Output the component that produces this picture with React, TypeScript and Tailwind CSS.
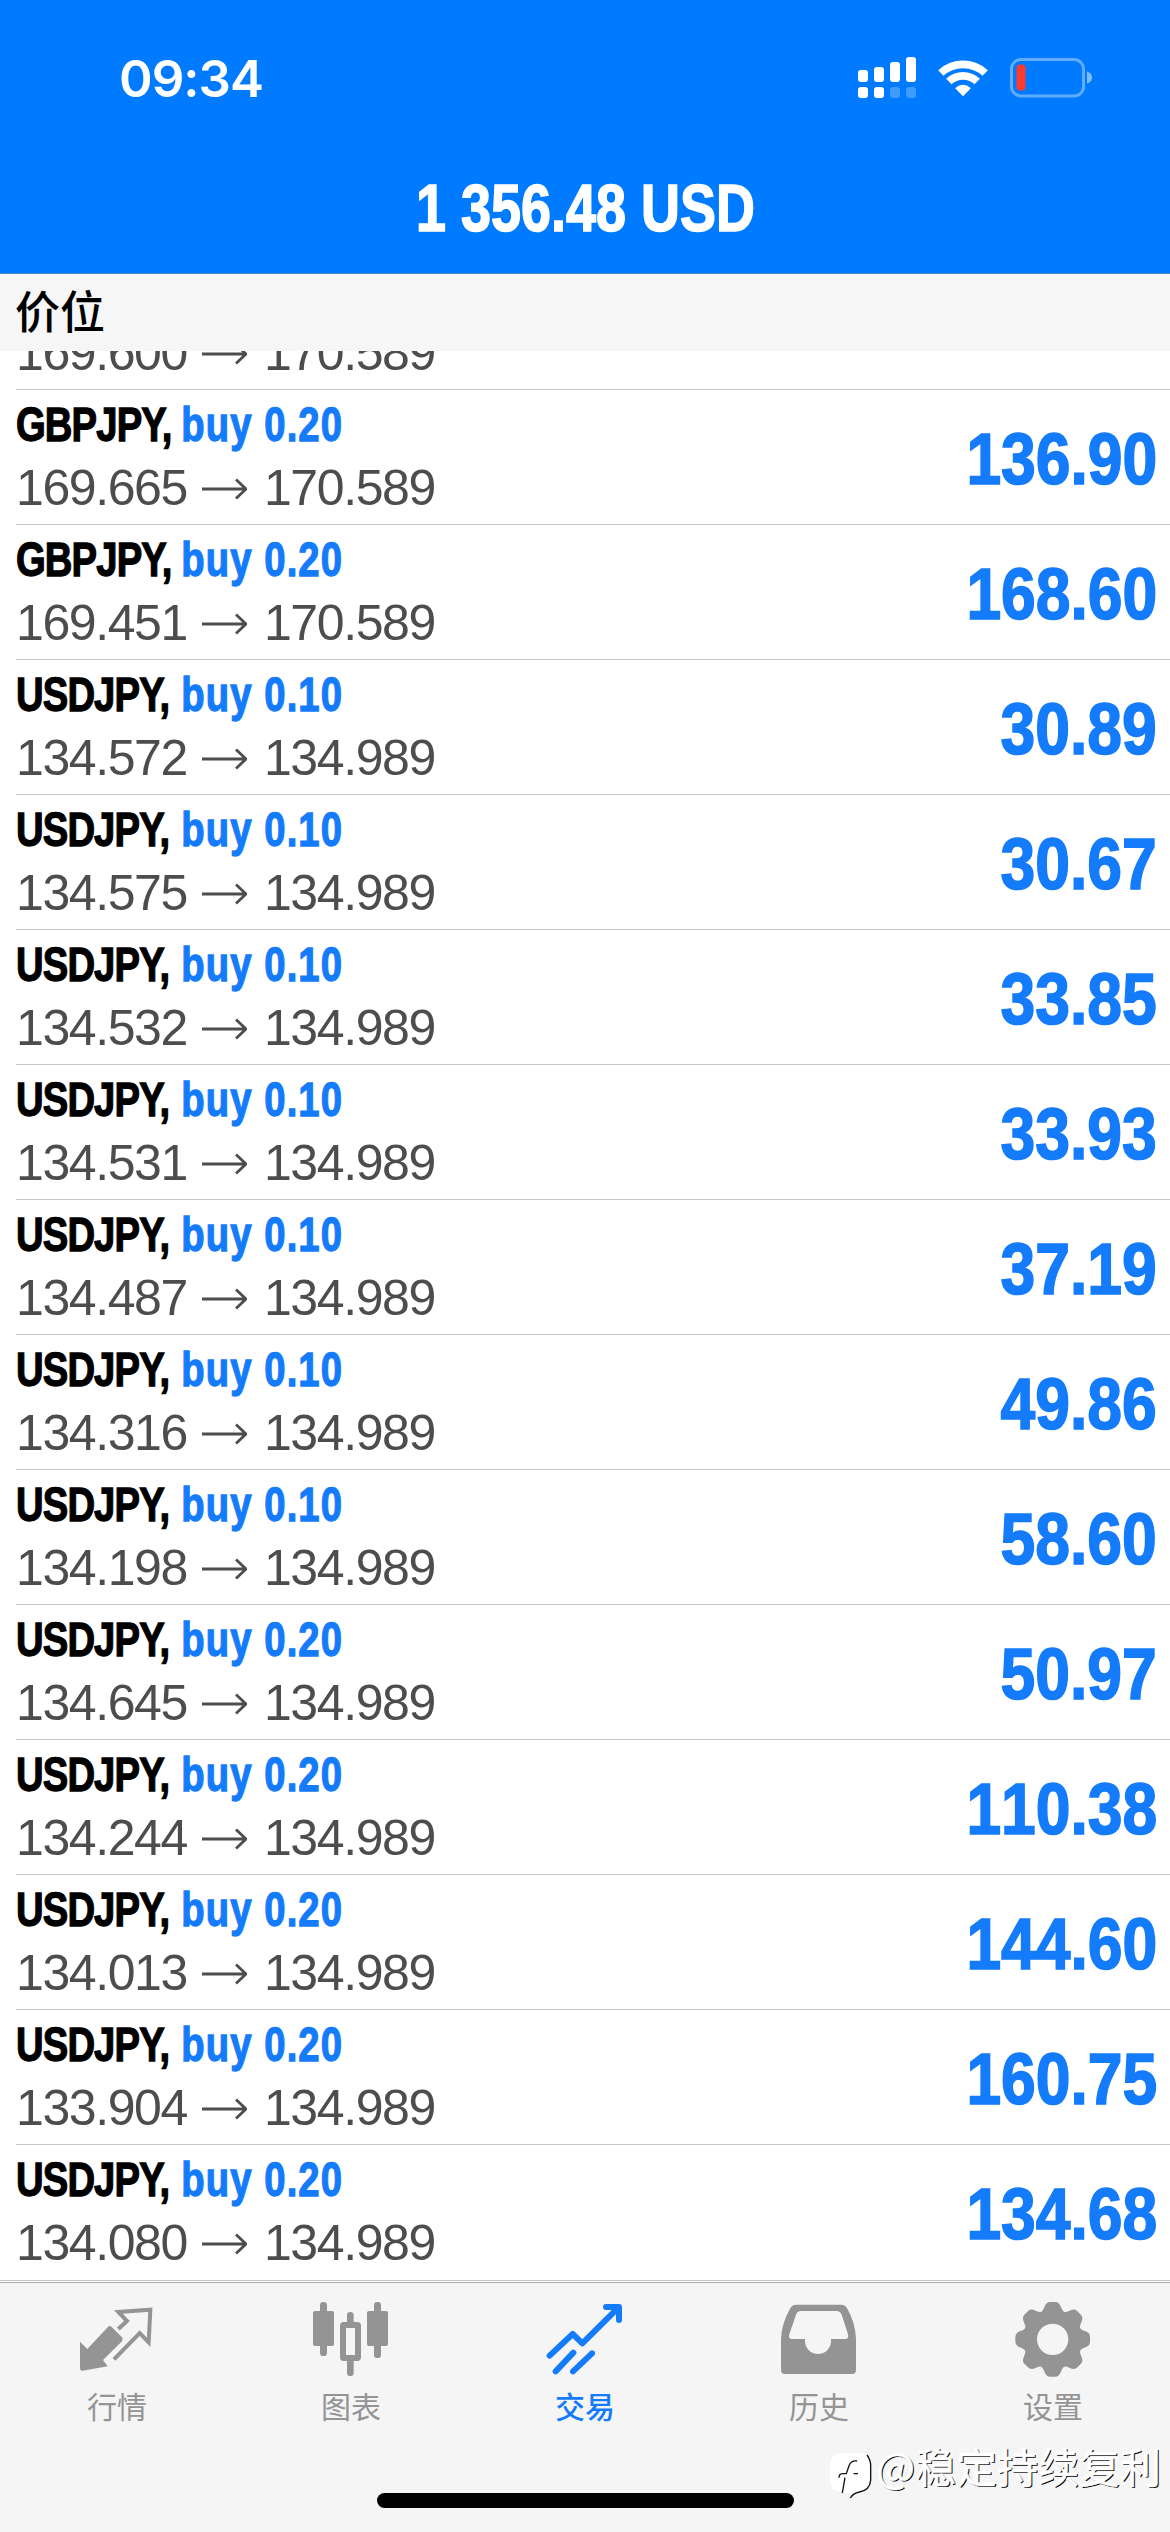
import type { ReactNode } from "react";

type Position = {
  symbol?: string;
  lots?: string;
  open: string;
  current: string;
  profit?: string;
};

const positions: Position[] = [
  // scrolled under the section title, only its price line is left in view
  { open: "169.600", current: "170.589" },
  { symbol: "GBPJPY", lots: "0.20", open: "169.665", current: "170.589", profit: "136.90" },
  { symbol: "GBPJPY", lots: "0.20", open: "169.451", current: "170.589", profit: "168.60" },
  { symbol: "USDJPY", lots: "0.10", open: "134.572", current: "134.989", profit: "30.89" },
  { symbol: "USDJPY", lots: "0.10", open: "134.575", current: "134.989", profit: "30.67" },
  { symbol: "USDJPY", lots: "0.10", open: "134.532", current: "134.989", profit: "33.85" },
  { symbol: "USDJPY", lots: "0.10", open: "134.531", current: "134.989", profit: "33.93" },
  { symbol: "USDJPY", lots: "0.10", open: "134.487", current: "134.989", profit: "37.19" },
  { symbol: "USDJPY", lots: "0.10", open: "134.316", current: "134.989", profit: "49.86" },
  { symbol: "USDJPY", lots: "0.10", open: "134.198", current: "134.989", profit: "58.60" },
  { symbol: "USDJPY", lots: "0.20", open: "134.645", current: "134.989", profit: "50.97" },
  { symbol: "USDJPY", lots: "0.20", open: "134.244", current: "134.989", profit: "110.38" },
  { symbol: "USDJPY", lots: "0.20", open: "134.013", current: "134.989", profit: "144.60" },
  { symbol: "USDJPY", lots: "0.20", open: "133.904", current: "134.989", profit: "160.75" },
  { symbol: "USDJPY", lots: "0.20", open: "134.080", current: "134.989", profit: "134.68" },
];

function SignalIcon() {
  return (
    <svg width="58" height="42" viewBox="0 0 58 42" fill="#fff">
      <rect x="0" y="13" width="10" height="12" rx="3" />
      <rect x="16" y="10" width="10" height="15" rx="3" />
      <rect x="32" y="5" width="10" height="20" rx="3" />
      <rect x="48" y="0" width="10" height="25" rx="3" />
      <rect x="0" y="30" width="10" height="11" rx="3" />
      <rect x="16" y="30" width="10" height="11" rx="3" />
      <rect x="32" y="30" width="10" height="11" rx="3" opacity="0.25" />
      <rect x="48" y="30" width="10" height="11" rx="3" opacity="0.25" />
    </svg>
  );
}

function WifiIcon() {
  return (
    <svg width="50" height="38" viewBox="0 0 50 38" fill="none" stroke="#fff" strokeWidth="7.8">
      <path d="M2.8 14 A32.8 32.8 0 0 1 47.2 14" />
      <path d="M10.8 22.5 A20.6 20.6 0 0 1 39.2 22.5" />
      <path
        d="M18.2 29.2 A10 10 0 0 1 31.8 29.2 L25 36.2 Z"
        fill="#fff"
        strokeWidth="1.5"
        strokeLinejoin="round"
      />
    </svg>
  );
}

function BatteryIcon() {
  return (
    <svg width="83" height="40" viewBox="0 0 83 40">
      <rect x="1.5" y="1.5" width="72" height="36.5" rx="9.5" fill="none" stroke="#fff" strokeOpacity="0.38" strokeWidth="3" />
      <path d="M77 13.5 q5 1.5 5 6 t-5 6 Z" fill="#fff" fillOpacity="0.5" />
      <rect x="6.5" y="6.5" width="9" height="26" rx="3.5" fill="#ff3b30" />
    </svg>
  );
}

function QuotesIcon() {
  return (
    <svg width="80" height="80" viewBox="231 510 240 240" fill="currentColor">
      <path
        d="M355 597 L381 573 L355 546 L451 539 L446 637 L419 609 L342 688"
        fill="none"
        stroke="currentColor"
        strokeWidth="12"
      />
      <path d="M240 635 L262 657 L323 592 Q328 585 335 591 L366 622 Q371 628 366 634 L309 690 L323 709 L248 722 Q240 723 240 714 Z" />
    </svg>
  );
}

function ChartIcon() {
  return (
    <svg width="80" height="80" viewBox="933 510 240 240" fill="currentColor">
      <rect x="960" y="516" width="21" height="162" rx="10" />
      <rect x="939" y="543" width="63" height="105" rx="6" />
      <rect x="1122" y="516" width="21" height="168" rx="10" />
      <rect x="1101" y="543" width="63" height="105" rx="6" />
      <path d="M1041 580 V556 Q1041 546 1051 546 Q1061 546 1061 556 V580 Z" />
      <path d="M1041 690 V728 Q1041 738 1051 738 Q1061 738 1061 728 V690 Z" />
      <rect x="1029" y="585" width="45" height="99" rx="2" fill="none" stroke="currentColor" strokeWidth="18" strokeLinejoin="round" />
    </svg>
  );
}

function TradeIcon() {
  return (
    <svg
      width="80"
      height="80"
      viewBox="285 90 240 240"
      fill="none"
      stroke="currentColor"
      strokeWidth="18"
      strokeLinecap="round"
      strokeLinejoin="round"
    >
      <path d="M299 257 L368 192 L397 220 L505 113" />
      <path d="M468 111 H507 V150" />
      <path d="M317 304 L370 248" />
      <path d="M369 304 L426 250" />
    </svg>
  );
}

function HistoryIcon() {
  return (
    <svg width="80" height="80" viewBox="87 90 240 240" fill="currentColor" fillRule="evenodd">
      <path d="M93 206 V300 Q93 312 105 312 H306 Q318 312 318 300 V206 Q316 158 292 116 Q286 104 274 104 H138 Q126 104 120 116 Q95 160 93 206 Z M152 123 H259 Q270 123 275 134 L294 193 Q297 207 286 207 H243 V213 A39 39 0 0 1 165 213 V207 H126 Q114 207 118 193 L138 134 Q142 123 152 123 Z" />
    </svg>
  );
}

function SettingsIcon() {
  const teeth = [0, 45, 90, 135, 180, 225, 270, 315];
  return (
    <svg width="80" height="80" viewBox="789 90 240 240" fill="none" stroke="currentColor">
      <circle cx="908" cy="208" r="66" strokeWidth="38" />
      {teeth.map((angle) => (
        <path
          key={angle}
          d="M875 133 Q885 126 889 113 Q893 102 900 102 H916 Q923 102 927 113 Q931 126 941 133 Z"
          fill="currentColor"
          strokeWidth="12"
          strokeLinejoin="round"
          transform={`rotate(${angle} 908 208)`}
        />
      ))}
    </svg>
  );
}

const tabs: { label: string; icon: ReactNode; active?: boolean }[] = [
  { label: "行情", icon: <QuotesIcon /> },
  { label: "图表", icon: <ChartIcon /> },
  { label: "交易", icon: <TradeIcon />, active: true },
  { label: "历史", icon: <HistoryIcon /> },
  { label: "设置", icon: <SettingsIcon /> },
];

function PositionRow({ item }: { item: Position }) {
  return (
    <div className="ml-4 flex h-[135px] shrink-0 justify-between border-b border-[#c4c4c6] pr-[13px] last:border-b-0">
      <div className="pt-1">
        <div className="flex h-[60px] origin-left scale-x-[0.78] whitespace-nowrap text-[49px] font-bold leading-[60px] [-webkit-text-stroke:1.3px_currentColor]">
          {item.symbol && (
            <>
              <span className="w-[212px] tracking-[-1.1px] text-black">{item.symbol},</span>
              <span className="tracking-[1.4px] text-[#147bfa]">buy {item.lots}</span>
            </>
          )}
        </div>
        <div className="mt-1 flex h-[60px] items-center text-[50px] leading-[60px] tracking-[-1.4px] text-[#4d4d50] [font-kerning:none]">
          <span>{item.open}</span>
          <svg
            className="ml-[15px] mr-[17px] mt-px"
            width="45"
            height="22"
            viewBox="0 0 45 22"
            fill="none"
            stroke="currentColor"
            strokeWidth="2.8"
          >
            <path d="M0 11 H44 M34 1.5 L44 11 L34 20.5" />
          </svg>
          <span>{item.current}</span>
        </div>
      </div>
      {item.profit && (
        <div className="origin-right scale-x-[0.855] pt-0.5 text-[73px] font-bold leading-[134px] text-[#147bfa] [-webkit-text-stroke:1.6px_currentColor] [font-kerning:none]">
          {item.profit}
        </div>
      )}
    </div>
  );
}

export default function App() {
  return (
    <div className="relative flex h-[2532px] w-[1170px] flex-col overflow-hidden bg-white font-['Liberation_Sans','Noto_Sans_CJK_SC',sans-serif]">
      <header className="flex h-[274px] shrink-0 flex-col border-b border-[#4f86c4] bg-[#007aff] text-white">
        <div className="flex h-[156px] items-center justify-between pl-[119px] pr-[77px]">
          <span className="font-['Inter',sans-serif] text-[51px] font-semibold leading-none tracking-[-1px]">09:34</span>
          <div className="flex items-center gap-[22px]">
            <SignalIcon />
            <WifiIcon />
            <BatteryIcon />
          </div>
        </div>
        <div className="flex justify-center">
          <h1 className="scale-x-[0.805] whitespace-nowrap text-[67px] font-bold leading-[104px] [-webkit-text-stroke:1.6px_currentColor] [font-kerning:none]">
            1 356.48 USD
          </h1>
        </div>
      </header>

      <div className="flex h-[77px] shrink-0 items-center bg-[#f6f6f7] pb-[5px] pl-[15px] font-['Noto_Sans_CJK_SC',sans-serif] text-[45px] font-medium leading-[72px] text-black">
        价位
      </div>

      <main className="flex h-[1930px] shrink-0 flex-col justify-end overflow-hidden border-b border-[#c4c4c6]">
        {positions.map((item) => (
          <PositionRow key={item.open} item={item} />
        ))}
      </main>

      <nav className="mt-px flex grow flex-col items-center justify-between border-t border-[#adadb0] bg-[#f5f5f5]">
        <div className="grid w-full grid-cols-5 pt-[17px]">
          {tabs.map((tab) => (
            <div
              key={tab.label}
              className={
                tab.active
                  ? "flex flex-col items-center text-[#147bfa]"
                  : "flex flex-col items-center text-[#949494]"
              }
            >
              {tab.icon}
              <span
                className={
                  tab.active
                    ? "mt-[3px] font-['Noto_Sans_CJK_SC',sans-serif] text-[30px] font-medium leading-[44px]"
                    : "mt-[3px] font-['Noto_Sans_CJK_SC',sans-serif] text-[30px] leading-[44px]"
                }
              >
                {tab.label}
              </span>
            </div>
          ))}
        </div>
        <div className="mb-6 h-[15px] w-[417px] rounded-full bg-black" />
      </nav>

      <div className="absolute right-[9px] top-[2429px] flex items-center">
        <svg className="-mr-[5px] mt-[12px]" width="60" height="60" viewBox="0 0 180 180">
          <path d="M27 75 Q27 36 68 36 H110 Q148 36 148 75 V118 Q146 148 112 153 Q96 156 88 170 L86 155 H70 Q27 155 27 112 Z" fill="#fff" />
          <path d="M138 42 Q150 58 149 78 V118 Q146 148 115 153 Q96 157 88 171" fill="none" stroke="#111" strokeWidth="4" />
          <path d="M108 60 Q90 58 84 74 L76 98 H64 Q54 99 54 110 M72 110 L64 156 M98 98 H111" fill="none" stroke="#111" strokeWidth="4" />
        </svg>
        <span className="whitespace-nowrap font-['Noto_Sans_CJK_SC',sans-serif] text-[41px] leading-[60px] text-white [-webkit-text-stroke:0.5px_#fff] [text-shadow:1.3px_1.3px_0_#000]">
          @稳定持续复利
        </span>
      </div>
    </div>
  );
}
